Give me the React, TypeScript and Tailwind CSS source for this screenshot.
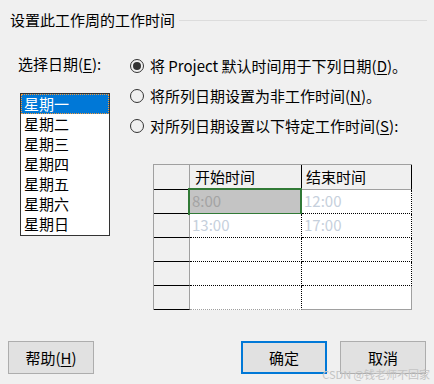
import React from 'react';

const FONT = '"Noto Sans CJK SC", "Noto Sans", "Liberation Sans", sans-serif';

const days = ['星期一', '星期二', '星期三', '星期四', '星期五', '星期六', '星期日'];

function Key({ k }: { k: string }) {
  return (
    <>
      (<span className="underline underline-offset-2">{k}</span>)
    </>
  );
}

function Radio({ checked, children }: { checked?: boolean; children: React.ReactNode }) {
  return (
    <div className="flex items-center h-[20px]">
      <span className="w-[14px] h-[14px] rounded-full border border-[#333333] flex items-center justify-center shrink-0">
        {checked && <span className="w-[8px] h-[8px] rounded-full bg-[#333333]" />}
      </span>
      <span className="ml-[6px] whitespace-nowrap">{children}</span>
    </div>
  );
}

function DataRow({ a, b, last, selected }: { a?: string; b?: string; last?: boolean; selected?: boolean }) {
  const bottom = last ? 'border-b border-[#a0a0a0]' : 'border-b border-dotted border-black';
  return (
    <div className="flex h-[24px]">
      <div className="w-[36px] border-r border-[#a0a0a0] border-b border-b-black bg-[#f0f0f0]" />
      <div className={`relative w-[112px] border-r border-dotted border-r-black ${bottom} bg-white`}>
        {selected && (
          <div className="absolute -left-[2px] -top-[2px] w-[114px] h-[27px] border-2 border-[#317a36] bg-[#c4c4c4]" />
        )}
        <span className={`relative pl-[2px] leading-[22px] ${selected ? 'text-[#a3a3a3]' : 'text-[#c6d0dc]'}`}>{a}</span>
      </div>
      <div className={`w-[110px] border-r border-[#a0a0a0] ${bottom} bg-white`}>
        <span className="pl-[2px] leading-[22px] text-[#c6d0dc]">{b}</span>
      </div>
    </div>
  );
}

export default function App() {
  return (
    <div
      className="relative w-[434px] h-[384px] bg-[#f0f0f0] text-black text-[15px] leading-[20px] pt-[10px] overflow-hidden"
      style={{ fontFamily: FONT }}
    >
      {/* Group title */}
      <div className="flex items-center h-[20px] pl-[10px] pr-[7px]">
        <span className="whitespace-nowrap">设置此工作周的工作时间</span>
        <div className="flex-1 h-px bg-[#dcdcdc] ml-[4px]" />
      </div>

      <div className="flex mt-[24px]">
        {/* Day list */}
        <div className="w-[130px] pl-[18px]">
          <div className="h-[20px] whitespace-nowrap">
            选择日期<Key k="E" />:
          </div>
          <div className="mt-[19px] ml-[2px] w-[90px] h-[143px] border border-[#333333] bg-white">
            {days.map((d, i) => (
              <div
                key={d}
                className={`h-[20px] pl-[3px] leading-[20px] ${
                  i === 0 ? 'bg-[#0078d7] text-white outline outline-1 outline-dotted outline-[#f39a3c] -outline-offset-1' : ''
                }`}
              >
                {d}
              </div>
            ))}
          </div>
        </div>

        {/* Options + table */}
        <div className="flex flex-col pt-[2px]">
          <div className="flex flex-col gap-[10px]">
            <Radio checked>
              将 Project 默认时间用于下列日期<Key k="D" />。
            </Radio>
            <Radio>
              将所列日期设置为非工作时间<Key k="N" />。
            </Radio>
            <Radio>
              对所列日期设置以下特定工作时间<Key k="S" />:
            </Radio>
          </div>

          <div className="mt-[28px] ml-[23px] w-[259px] border-l border-t border-[#a0a0a0] flex flex-col">
            <div className="flex h-[25px] bg-[#f0f0f0]">
              <div className="w-[36px] border-r border-[#a0a0a0] border-b border-b-black" />
              <div className="w-[112px] border-r border-black border-b border-b-[#a0a0a0] pl-[5px] leading-[24px]">
                开始时间
              </div>
              <div className="w-[110px] border-r border-black border-b border-b-[#a0a0a0] pl-[4px] leading-[24px]">
                结束时间
              </div>
            </div>
            <DataRow a="8:00" b="12:00" selected />
            <DataRow a="13:00" b="17:00" />
            <DataRow />
            <DataRow />
            <DataRow last />
          </div>
        </div>
      </div>

      {/* Buttons */}
      <div className="flex items-center mt-[31px] px-[8px]">
        <button className="w-[86px] h-[33px] bg-[#e1e1e1] border border-[#adadad]">
          帮助<Key k="H" />
        </button>
        <button className="ml-auto w-[86px] h-[33px] bg-[#e1e1e1] border-2 border-[#0078d7]">确定</button>
        <button className="ml-[13px] w-[86px] h-[33px] bg-[#e1e1e1] border border-[#adadad]">取消</button>
      </div>

      {/* Watermark */}
      <div className="absolute right-[4px] bottom-[4px] text-[11px] leading-[12px] text-[#c4c4c4] whitespace-nowrap">
        CSDN @钱老师不回家
      </div>
    </div>
  );
}
